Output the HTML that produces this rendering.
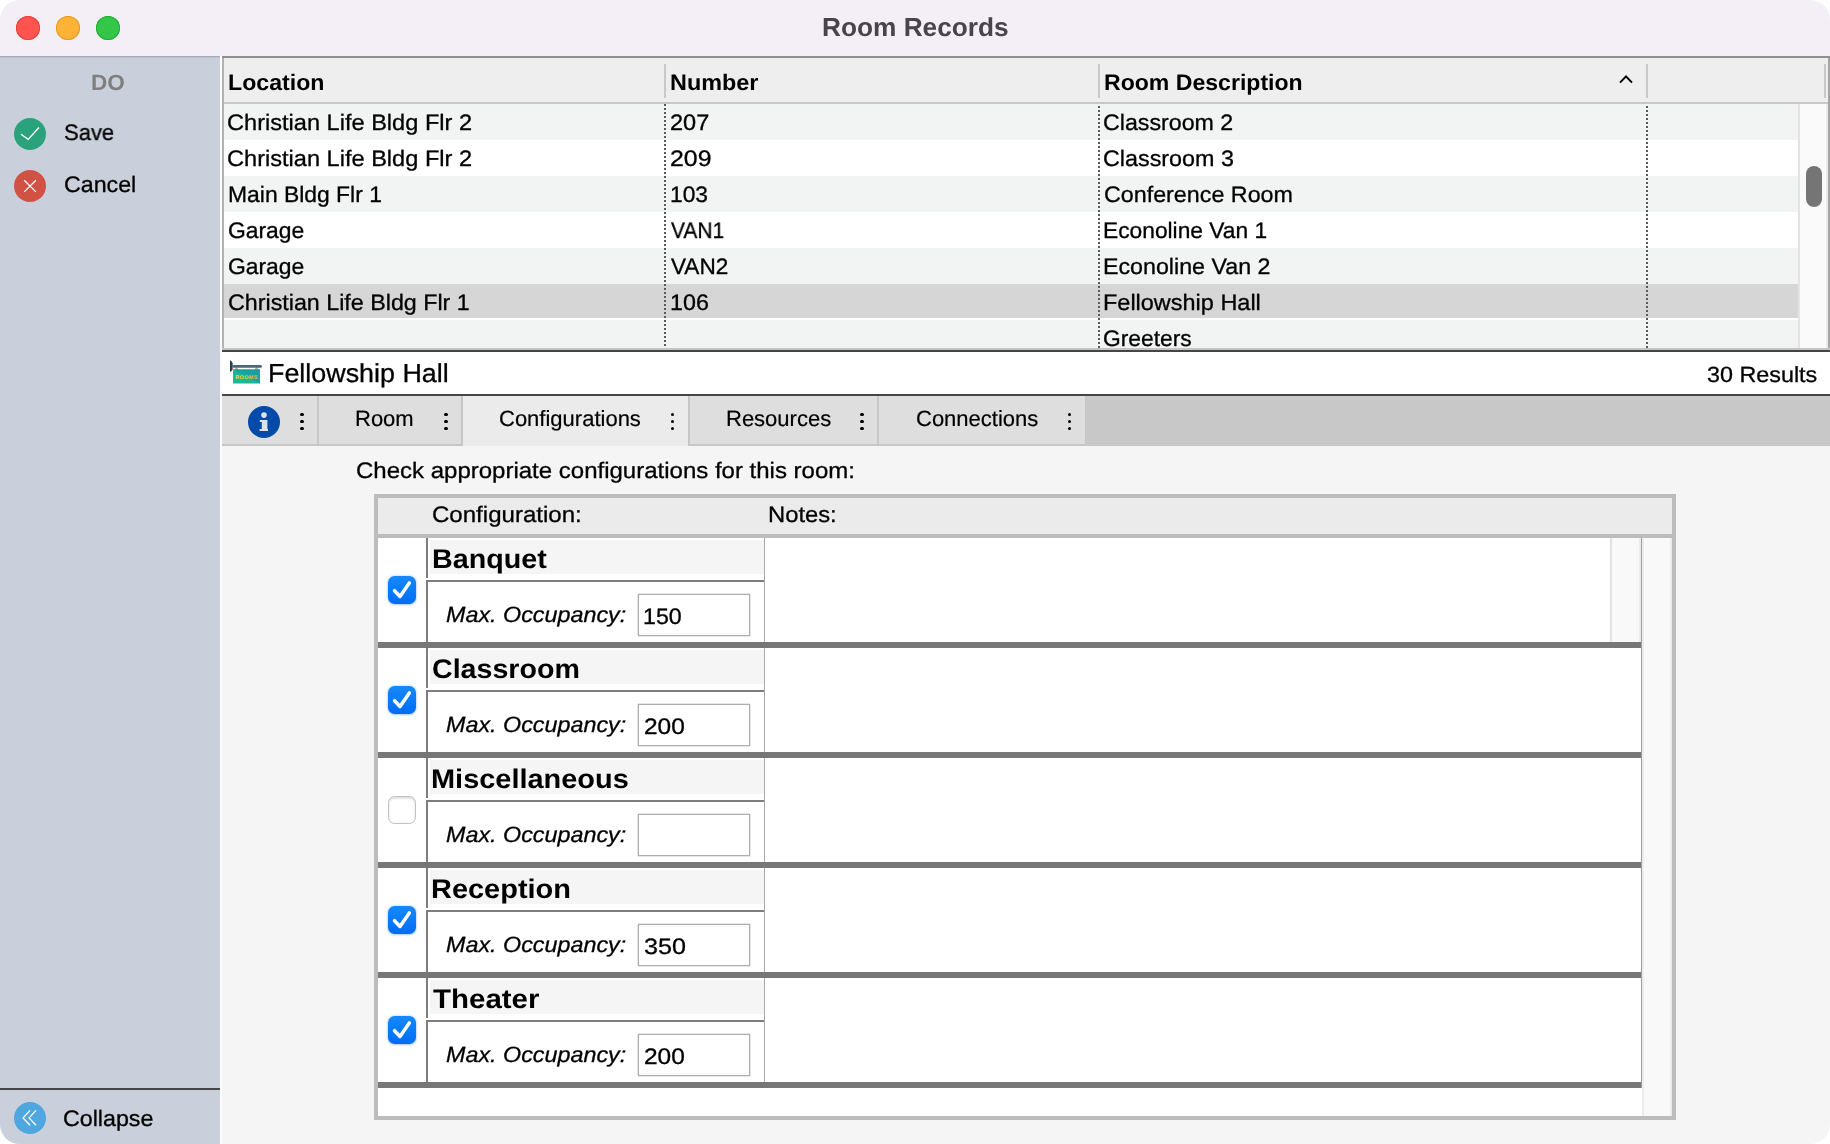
<!DOCTYPE html>
<html lang="en">
<head>
<meta charset="utf-8">
<title>Room Records</title>
<style>
*{box-sizing:border-box;margin:0;padding:0}
html,body{width:1830px;height:1144px;overflow:hidden;background:#fff}
body{font-family:"Liberation Sans",sans-serif;font-size:22px;color:#000;position:relative;text-rendering:geometricPrecision}
.win{position:absolute;left:0;top:0;width:1830px;height:1144px;border-radius:20px;overflow:hidden;background:#f5f5f5}
.abs{position:absolute}
.t{position:absolute;white-space:nowrap;line-height:1;transform-origin:0 0;will-change:transform}
.titlebar{position:absolute;left:0;top:0;width:1830px;height:56px;background:#f4eff7}
.tl{position:absolute;top:16px;width:24px;height:24px;border-radius:50%}
.side{position:absolute;left:0;top:56px;width:220px;height:1088px;background:linear-gradient(#9aa2ad,#bcc3ce 1.5px,#c9d0db 2.5px)}
.circ{position:absolute;width:32px;height:32px;border-radius:50%}
.circ svg{display:block}
.list{position:absolute;left:222px;top:58px;width:1608px;height:292px;background:#fff;overflow:hidden}
.lhead{position:absolute;left:0;top:0;width:1608px;height:44px;background:#eeeeee}
.row{position:absolute;left:2px;width:1574px;height:36px}
.odd{background:#f2f3f3}
.sel{background:#d6d6d6}
.hsep{position:absolute;top:6px;width:2px;height:34px;background:#c9c9c9}
.dot{position:absolute;top:46px;width:2px;height:244px;background:repeating-linear-gradient(to bottom,#5a5a5a 0,#5a5a5a 2px,transparent 2px,transparent 4px)}
.lt{transform:scaleX(1.045)}
.lb{font-weight:700;transform:scaleX(1.04)}
.tab{position:absolute;top:396px;height:50px;background:#dedede;border-right:2px solid #c6c6c6;border-bottom:2px solid #c6c6c6}
.tab.on{background:#ebebeb;border-bottom:none;border-right:none}
.vd{position:absolute;width:3.1px;height:3.1px;border-radius:50%;background:#000}
.cfg{position:absolute;left:374px;top:494px;width:1302px;height:626px;border:4px solid #bcbcbc;background:#fff}
.crow{position:absolute;left:0;width:1264px;height:110px}
.cb{position:absolute;left:10px;top:38px;width:28px;height:28px;border-radius:6.5px}
.cb svg{display:block}
.cb.on{background:linear-gradient(#1888fc,#0a7df9 45%,#006cf6);box-shadow:0 0 3px rgba(0,110,250,.35),0 1px 2px rgba(0,80,200,.2)}
.cb.off{background:#fff;border:1px solid #c2c2c2;box-shadow:inset 0 2px 2px rgba(0,0,0,.10),inset 0 0 2px rgba(0,0,0,.10)}
.nm{font-weight:700;transform:scaleX(1.1)}
.mo{font-style:italic;transform:scaleX(1.06)}
.inp{position:absolute;left:260px;top:56px;width:112px;height:42px;border:1px solid #adadad;background:#fff;box-shadow:0 0 0 .5px #d0d0d0}
.sf{-webkit-text-stroke:.3px currentColor}
.sf2{-webkit-text-stroke:.2px currentColor}
</style>
</head>
<body>
<div class="win">
<div class="titlebar">
<div class="tl" style="left:16px;background:#fe5450;box-shadow:inset 0 0 0 1px #e3423d"></div>
<div class="tl" style="left:56px;background:#feb236;box-shadow:inset 0 0 0 1px #e19c25"></div>
<div class="tl" style="left:96px;background:#33c748;box-shadow:inset 0 0 0 1px #25a937"></div>
<span id="k_title" class="t " style="left:822.44px;top:14px;font-size:26px;font-weight:700;color:#48444a;transform:scaleX(1.0093)">Room Records</span>
</div>
<div class="abs" style="left:220px;top:56px;width:2px;height:1088px;background:#fbfbfb"></div>
<div class="abs" style="left:222px;top:56px;width:1608px;height:2px;background:#8f8f8f"></div>
<div class="side"></div>
<span id="k_do" class="t " style="left:91.29px;top:72px;font-size:22px;font-weight:700;color:#7f7f7f;transform:scaleX(1.0267)">DO</span>
<div class="circ" style="left:14px;top:118px;background:#2aa37d"><svg width="32" height="32" viewBox="0 0 32 32"><path d="M7 16.2 L14.2 21.4 L24.9 9.5" fill="none" stroke="#fff" stroke-width="1.3"/></svg></div>
<span id="k_save" class="t sf" style="left:63.65px;top:122px;font-size:22.4px;transform:scaleX(0.9826)">Save</span>
<div class="circ" style="left:14px;top:170px;background:#d15145"><svg width="32" height="32" viewBox="0 0 32 32"><path d="M10.2 10.3 L21.9 21.9 M21.9 10.3 L10.2 21.9" fill="none" stroke="#fff" stroke-width="1.25"/></svg></div>
<span id="k_cancel" class="t sf" style="left:64.24px;top:174px;font-size:22.4px;transform:scaleX(1.0368)">Cancel</span>
<div class="abs" style="left:0;top:1088px;width:220px;height:2px;background:#47474a"></div>
<div class="circ" style="left:14px;top:1102px;background:#4ea7de"><svg width="32" height="32" viewBox="0 0 32 32"><path d="M16.1 8.4 L9.1 15.9 L16.1 23.3 M22 8.4 L15.1 15.9 L22 23.3" fill="none" stroke="#fff" stroke-width="1.3"/></svg></div>
<span id="k_collapse" class="t sf" style="left:63.26px;top:1108px;font-size:22.4px;transform:scaleX(1.0377)">Collapse</span>
<div class="list">
<div class="lhead"></div>
<div class="abs" style="left:0;top:44px;width:1608px;height:2px;background:#c8c8c8"></div>
<div class="row odd" style="top:46px">
<span id="k_a0" class="t lt sf" style="left:3.45px;top:8px;font-size:22.4px;transform:scaleX(1.0530)">Christian Life Bldg Flr 2</span>
<span id="k_b0" class="t lt sf" style="left:445.69px;top:8px;font-size:22.4px;transform:scaleX(1.0519)">207</span>
<span id="k_c0" class="t lt sf" style="left:879.49px;top:8px;font-size:22.4px;transform:scaleX(1.0362)">Classroom 2</span>
</div>
<div class="row " style="top:82px">
<span id="k_a1" class="t lt sf" style="left:3.45px;top:8px;font-size:22.4px;transform:scaleX(1.0530)">Christian Life Bldg Flr 2</span>
<span id="k_b1" class="t lt sf" style="left:445.73px;top:8px;font-size:22.4px;transform:scaleX(1.1097)">209</span>
<span id="k_c1" class="t lt sf" style="left:879.4px;top:8px;font-size:22.4px;transform:scaleX(1.0415)">Classroom 3</span>
</div>
<div class="row odd" style="top:118px">
<span id="k_a2" class="t lt sf" style="left:3.87px;top:8px;font-size:22.4px;transform:scaleX(1.0221)">Main Bldg Flr 1</span>
<span id="k_b2" class="t lt sf" style="left:446.14px;top:8px;font-size:22.4px;transform:scaleX(1.0168)">103</span>
<span id="k_c2" class="t lt sf" style="left:879.5px;top:8px;font-size:22.4px;transform:scaleX(1.0397)">Conference Room</span>
</div>
<div class="row " style="top:154px">
<span id="k_a3" class="t lt sf" style="left:4.19px;top:8px;font-size:22.4px;transform:scaleX(1.0210)">Garage</span>
<span id="k_b3" class="t lt sf" style="left:446.9px;top:8px;font-size:22.4px;transform:scaleX(0.9351)">VAN1</span>
<span id="k_c3" class="t lt sf" style="left:878.97px;top:8px;font-size:22.4px;transform:scaleX(1.0169)">Econoline Van 1</span>
</div>
<div class="row odd" style="top:190px">
<span id="k_a4" class="t lt sf" style="left:4.18px;top:8px;font-size:22.4px;transform:scaleX(1.0212)">Garage</span>
<span id="k_b4" class="t lt sf" style="left:446.72px;top:8px;font-size:22.4px;transform:scaleX(1.0075)">VAN2</span>
<span id="k_c4" class="t lt sf" style="left:878.83px;top:8px;font-size:22.4px;transform:scaleX(1.0376)">Econoline Van 2</span>
</div>
<div class="row sel" style="top:226px">
<div class="abs" style="left:0;top:34px;width:1574px;height:2px;background:#fff"></div>
<span id="k_a5" class="t lt sf" style="left:3.67px;top:8px;font-size:22.4px;transform:scaleX(1.0388)">Christian Life Bldg Flr 1</span>
<span id="k_b5" class="t lt sf" style="left:445.54px;top:8px;font-size:22.4px;transform:scaleX(1.0392)">106</span>
<span id="k_c5" class="t lt sf" style="left:879.11px;top:8px;font-size:22.4px;transform:scaleX(1.0481)">Fellowship Hall</span>
</div>
<div class="row odd" style="top:262px">
<span id="k_c6" class="t lt sf" style="left:879.1px;top:8px;font-size:22.4px;transform:scaleX(1.0180)">Greeters</span>
</div>
<div class="abs" style="left:1576px;top:46px;width:30px;height:246px;background:#fafafa;border-left:2px solid #e4e4e4;border-right:2px solid #ebebeb"></div>
<div class="abs" style="left:1584px;top:108px;width:16px;height:41px;border-radius:8px;background:#757575"></div>
<span id="k_hloc" class="t lb" style="left:6.06px;top:14px;font-size:22.4px;transform:scaleX(1.0339)">Location</span>
<span id="k_hnum" class="t lb" style="left:447.81px;top:14px;font-size:22.4px;transform:scaleX(1.0459)">Number</span>
<span id="k_hdesc" class="t lb" style="left:881.58px;top:14px;font-size:22.4px;transform:scaleX(1.0303)">Room Description</span>
<svg class="abs" style="left:1396px;top:16px" width="16" height="10" viewBox="0 0 16 10"><path d="M2 8.6 L8 2.4 L14 8.6" fill="none" stroke="#000" stroke-width="2"/></svg>
<div class="hsep" style="left:442px"></div>
<div class="hsep" style="left:876px"></div>
<div class="hsep" style="left:1424px"></div>
<div class="hsep" style="left:1602px"></div>
<div class="dot" style="left:442px;top:46px;height:244px"></div>
<div class="dot" style="left:876px;top:48px;height:242px"></div>
<div class="dot" style="left:1424px;top:48px;height:242px"></div>
<div class="abs" style="left:0;top:0;width:2px;height:292px;background:#b2b2b2"></div>
<div class="abs" style="left:1606px;top:0;width:2px;height:292px;background:#a6a6a6"></div>
<div class="abs" style="left:0;top:290px;width:1608px;height:2px;background:#c4c4c4"></div>
</div>
<div class="abs" style="left:222px;top:350px;width:1608px;height:2px;background:#454545"></div>
<div class="abs" style="left:222px;top:352px;width:1608px;height:42px;background:#fff"></div>
<svg class="abs" style="left:229px;top:360px" width="34" height="25" viewBox="0 0 34 25">
<defs><linearGradient id="g1" x1="0" y1="1" x2="1" y2="0"><stop offset="0" stop-color="#21bb96"/><stop offset=".5" stop-color="#1cb398"/><stop offset=".5" stop-color="#17a3a1"/><stop offset="1" stop-color="#15a0a2"/></linearGradient>
<linearGradient id="g2" x1="0" y1="0" x2="1" y2="0"><stop offset="0" stop-color="#ffdc1e"/><stop offset=".45" stop-color="#f2c81e"/><stop offset="1" stop-color="#ffa626"/></linearGradient></defs>
<path d="M1 .6 Q3 1 3.6 3.2 Q3.95 6.2 3.6 9.3 Q3 11.5 1 11.9 Z" fill="#2d3f4b"/>
<rect x="3.4" y="5" width="29.5" height="2.75" rx="1.3" fill="#4b6878"/>
<path d="M7.5 7.6 L8.9 9.5 L7.5 11 L6.1 9.5 Z M27.6 7.6 L29 9.5 L27.6 11 L26.2 9.5 Z" fill="none" stroke="#50636e" stroke-width=".7"/>
<rect x="4" y="9.2" width="27" height="14.3" rx=".6" fill="url(#g1)"/>
<path d="M7.5 9.3 L8.7 10.2 L7.5 11 L6.3 10.2 Z M27.6 9.3 L28.8 10.2 L27.6 11 L26.4 10.2 Z" fill="none" stroke="#3f7f88" stroke-width=".6"/>
<text x="17.5" y="18.9" font-family="Liberation Sans, sans-serif" font-size="5.4" font-weight="700" fill="url(#g2)" text-anchor="middle" letter-spacing=".4">ROOMS</text>
</svg>
<span id="k_ftitle" class="t sf" style="left:268.28px;top:360px;font-size:26px;transform:scaleX(1.0339)">Fellowship Hall</span>
<span id="k_res" class="t sf" style="left:1706.7px;top:364px;font-size:22px;transform:scaleX(1.0604)">30 Results</span>
<div class="abs" style="left:222px;top:394px;width:1608px;height:2px;background:#454545"></div>
<div class="abs" style="left:222px;top:396px;width:1608px;height:50px;background:#c8c8c8"></div>
<div class="tab" style="left:222px;width:97px"></div>
<svg class="abs" style="left:248px;top:406px" width="32" height="32" viewBox="0 0 32 32"><circle cx="16" cy="16" r="16" fill="#034aa9"/>
<circle cx="16" cy="9.1" r="2.8" fill="#e1e1e3"/><path d="M11.8 14.1 H19.4 V22.9 H20 V24.9 H11.6 V22.9 H13.8 V16.1 H11.8 Z" fill="#e1e1e3"/></svg>
<div class="vd" style="left:300.45px;top:412.65px"></div><div class="vd" style="left:300.45px;top:419.95px"></div><div class="vd" style="left:300.45px;top:427.25px"></div>
<div class="tab" style="left:319px;width:144px"></div>
<span class="t sf2" style="left:355px;top:408px;font-size:22px;">Room</span>
<div class="vd" style="left:444.45px;top:412.65px"></div><div class="vd" style="left:444.45px;top:419.95px"></div><div class="vd" style="left:444.45px;top:427.25px"></div>
<div class="tab on" style="left:463px;width:225px"></div>
<span class="t sf2" style="left:499px;top:408px;font-size:22px;">Configurations</span>
<div class="vd" style="left:670.75px;top:412.65px"></div><div class="vd" style="left:670.75px;top:419.95px"></div><div class="vd" style="left:670.75px;top:427.25px"></div>
<div class="tab" style="left:688px;width:191px;border-left:2px solid #c6c6c6"></div>
<span class="t sf2" style="left:725.5px;top:408px;font-size:22px;">Resources</span>
<div class="vd" style="left:860.45px;top:412.65px"></div><div class="vd" style="left:860.45px;top:419.95px"></div><div class="vd" style="left:860.45px;top:427.25px"></div>
<div class="tab" style="left:879px;width:206px;border-right:none"></div>
<span class="t sf2" style="left:915.5px;top:408px;font-size:22px;">Connections</span>
<div class="vd" style="left:1067.95px;top:412.65px"></div><div class="vd" style="left:1067.95px;top:419.95px"></div><div class="vd" style="left:1067.95px;top:427.25px"></div>
<span id="k_check" class="t sf" style="left:355.7px;top:460px;font-size:22.4px;transform:scaleX(1.0720)">Check appropriate configurations for this room:</span>
<div class="cfg">
<div class="abs" style="left:0;top:0;width:1294px;height:36px;background:#ebebeb"></div>
<div class="abs" style="left:0;top:36px;width:1294px;height:4px;background:#bcbcbc"></div>
<span id="k_cfg" class="t sf" style="left:53.56px;top:6px;font-size:22.4px;transform:scaleX(1.0741)">Configuration:</span>
<span id="k_notes" class="t sf" style="left:390.09px;top:6px;font-size:22.4px;transform:scaleX(1.0614)">Notes:</span>
<div class="crow" style="top:40px">
<div class="abs" style="left:52px;top:2px;width:334px;height:34px;background:#f5f5f5"></div>
<div class="abs" style="left:48px;top:0;width:2px;height:40px;background:#7d7d7d"></div>
<div class="abs" style="left:48px;top:42px;width:338px;height:2px;background:#7d7d7d"></div>
<div class="abs" style="left:48px;top:44px;width:2px;height:60px;background:#7d7d7d"></div>
<div class="abs" style="left:386px;top:0;width:1.3px;height:104px;background:#a8a8a8"></div>
<div class="cb on"><svg width="28" height="28" viewBox="0 0 28 28"><path d="M6.5 14.7 L12 20.5 L21.3 6.9" fill="none" stroke="#fff" stroke-width="3.5" stroke-linecap="round" stroke-linejoin="round"/></svg></div>
<span id="k_n0" class="t nm" style="left:53.56px;top:8px;font-size:27px;transform:scaleX(1.0627)">Banquet</span>
<span id="k_m0" class="t mo sf" style="left:67.92px;top:66px;font-size:22px;transform:scaleX(1.0606)">Max. Occupancy:</span>
<div class="inp"><span id="k_v0" class="t sf" style="left:4.32px;top:11px;font-size:22.4px;transform:scaleX(1.0368)">150</span></div>
<div class="abs" style="left:1232px;top:0;width:31px;height:104px;background:#f9f9f9;border-left:2px solid #e3e3e3;border-right:2.5px solid #ececec"></div>
<div class="abs" style="left:0;top:104px;width:1264px;height:6px;background:#777"></div>
</div>
<div class="crow" style="top:150px">
<div class="abs" style="left:52px;top:2px;width:334px;height:34px;background:#f5f5f5"></div>
<div class="abs" style="left:48px;top:0;width:2px;height:40px;background:#7d7d7d"></div>
<div class="abs" style="left:48px;top:42px;width:338px;height:2px;background:#7d7d7d"></div>
<div class="abs" style="left:48px;top:44px;width:2px;height:60px;background:#7d7d7d"></div>
<div class="abs" style="left:386px;top:0;width:1.3px;height:104px;background:#a8a8a8"></div>
<div class="cb on"><svg width="28" height="28" viewBox="0 0 28 28"><path d="M6.5 14.7 L12 20.5 L21.3 6.9" fill="none" stroke="#fff" stroke-width="3.5" stroke-linecap="round" stroke-linejoin="round"/></svg></div>
<span id="k_n1" class="t nm" style="left:54.25px;top:8px;font-size:27px;transform:scaleX(1.0593)">Classroom</span>
<span id="k_m1" class="t mo sf" style="left:67.92px;top:66px;font-size:22px;transform:scaleX(1.0606)">Max. Occupancy:</span>
<div class="inp"><span id="k_v1" class="t sf" style="left:4.5px;top:11px;font-size:22.4px;transform:scaleX(1.0939)">200</span></div>
<div class="abs" style="left:0;top:104px;width:1264px;height:6px;background:#777"></div>
</div>
<div class="crow" style="top:260px">
<div class="abs" style="left:52px;top:2px;width:334px;height:34px;background:#f5f5f5"></div>
<div class="abs" style="left:48px;top:0;width:2px;height:40px;background:#7d7d7d"></div>
<div class="abs" style="left:48px;top:42px;width:338px;height:2px;background:#7d7d7d"></div>
<div class="abs" style="left:48px;top:44px;width:2px;height:60px;background:#7d7d7d"></div>
<div class="abs" style="left:386px;top:0;width:1.3px;height:104px;background:#a8a8a8"></div>
<div class="cb off"></div>
<span id="k_n2" class="t nm" style="left:53.36px;top:8px;font-size:27px;transform:scaleX(1.0712)">Miscellaneous</span>
<span id="k_m2" class="t mo sf" style="left:67.92px;top:66px;font-size:22px;transform:scaleX(1.0606)">Max. Occupancy:</span>
<div class="inp"></div>
<div class="abs" style="left:0;top:104px;width:1264px;height:6px;background:#777"></div>
</div>
<div class="crow" style="top:370px">
<div class="abs" style="left:52px;top:2px;width:334px;height:34px;background:#f5f5f5"></div>
<div class="abs" style="left:48px;top:0;width:2px;height:40px;background:#7d7d7d"></div>
<div class="abs" style="left:48px;top:42px;width:338px;height:2px;background:#7d7d7d"></div>
<div class="abs" style="left:48px;top:44px;width:2px;height:60px;background:#7d7d7d"></div>
<div class="abs" style="left:386px;top:0;width:1.3px;height:104px;background:#a8a8a8"></div>
<div class="cb on"><svg width="28" height="28" viewBox="0 0 28 28"><path d="M6.5 14.7 L12 20.5 L21.3 6.9" fill="none" stroke="#fff" stroke-width="3.5" stroke-linecap="round" stroke-linejoin="round"/></svg></div>
<span id="k_n3" class="t nm" style="left:53.29px;top:8px;font-size:27px;transform:scaleX(1.0722)">Reception</span>
<span id="k_m3" class="t mo sf" style="left:67.92px;top:66px;font-size:22px;transform:scaleX(1.0606)">Max. Occupancy:</span>
<div class="inp"><span id="k_v3" class="t sf" style="left:4.57px;top:11px;font-size:22.4px;transform:scaleX(1.1216)">350</span></div>
<div class="abs" style="left:0;top:104px;width:1264px;height:6px;background:#777"></div>
</div>
<div class="crow" style="top:480px">
<div class="abs" style="left:52px;top:2px;width:334px;height:34px;background:#f5f5f5"></div>
<div class="abs" style="left:48px;top:0;width:2px;height:40px;background:#7d7d7d"></div>
<div class="abs" style="left:48px;top:42px;width:338px;height:2px;background:#7d7d7d"></div>
<div class="abs" style="left:48px;top:44px;width:2px;height:60px;background:#7d7d7d"></div>
<div class="abs" style="left:386px;top:0;width:1.3px;height:104px;background:#a8a8a8"></div>
<div class="cb on"><svg width="28" height="28" viewBox="0 0 28 28"><path d="M6.5 14.7 L12 20.5 L21.3 6.9" fill="none" stroke="#fff" stroke-width="3.5" stroke-linecap="round" stroke-linejoin="round"/></svg></div>
<span id="k_n4" class="t nm" style="left:54.79px;top:8px;font-size:27px;transform:scaleX(1.0913)">Theater</span>
<span id="k_m4" class="t mo sf" style="left:67.92px;top:66px;font-size:22px;transform:scaleX(1.0606)">Max. Occupancy:</span>
<div class="inp"><span id="k_v4" class="t sf" style="left:4.5px;top:11px;font-size:22.4px;transform:scaleX(1.0939)">200</span></div>
<div class="abs" style="left:0;top:104px;width:1264px;height:6px;background:#777"></div>
</div>
<div class="abs" style="left:1264px;top:40px;width:30px;height:578px;background:#f9f9f9;border-left:2px solid #ececec;border-right:2px solid #ececec"></div>
<div class="abs" style="left:1263px;top:40px;width:1px;height:550px;background:#9e9e9e"></div>
</div>
</div>
</body>
</html>
